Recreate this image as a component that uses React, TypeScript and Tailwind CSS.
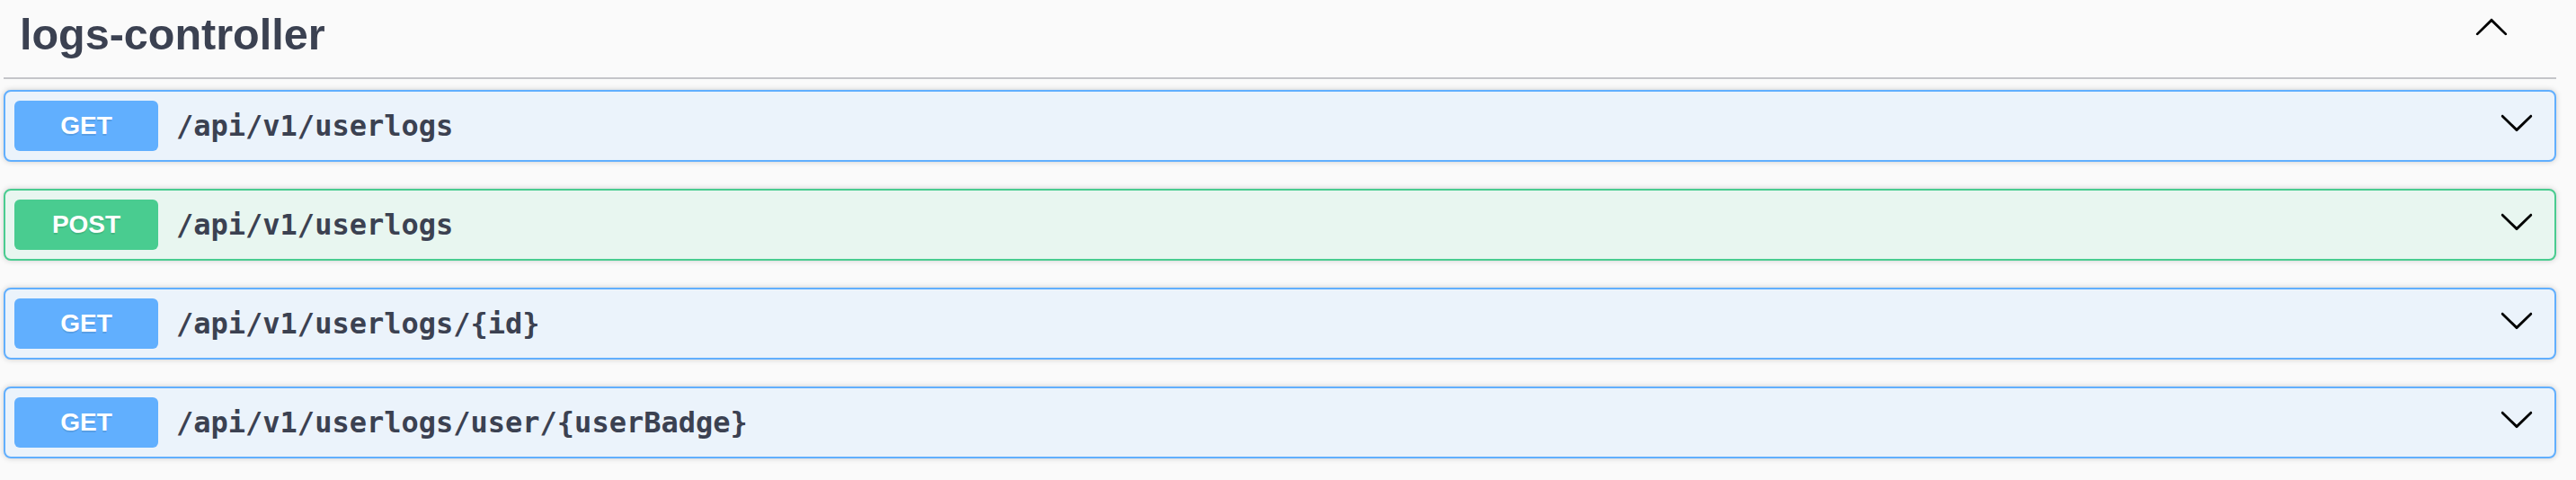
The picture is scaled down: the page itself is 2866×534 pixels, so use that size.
const ops = [
  { method: "GET", path: "/api/v1/userlogs" },
  { method: "POST", path: "/api/v1/userlogs" },
  { method: "GET", path: "/api/v1/userlogs/{id}" },
  { method: "GET", path: "/api/v1/userlogs/user/{userBadge}" },
];

function ArrowDown() {
  return (
    <svg viewBox="0 0 20 20" className="mb-[8px] h-[40px] w-[40px] shrink-0 fill-black">
      <path d="M17.418 6.109c.272-.268.709-.268.979 0s.271.701 0 .969l-7.908 7.83c-.27.268-.707.268-.979 0l-7.908-7.83c-.27-.268-.27-.701 0-.969.271-.268.709-.268.979 0L10 13.25l7.418-7.141z" />
    </svg>
  );
}

function ArrowUp() {
  return (
    <svg viewBox="0 0 20 20" className="mb-[18px] h-[40px] w-[40px] shrink-0 fill-black">
      <path d="M17.418 14.908c.272.268.709.268.979 0s.271-.701 0-.969l-7.908-7.83c-.27-.268-.707-.268-.979 0l-7.908 7.83c-.27.268-.27.701 0 .969.271.268.709.268.979 0L10 7.767l7.418 7.141z" />
    </svg>
  );
}

function OpBlock({ method, path }: { method: string; path: string }) {
  const post = method === "POST";
  return (
    <div
      className={
        post
          ? "mb-[30px] rounded-[8px] border-2 border-[#49cc90] bg-[#e8f6f0] shadow-[0_0_6px_rgba(0,0,0,0.19)]"
          : "mb-[30px] rounded-[8px] border-2 border-[#61affe] bg-[#ebf3fb] shadow-[0_0_6px_rgba(0,0,0,0.19)]"
      }
    >
      <div className="flex items-center p-[10px] pr-[22px]">
        <span
          className={
            post
              ? "flex h-[56px] w-[160px] shrink-0 items-center justify-center rounded-[6px] bg-[#49cc90] font-['Liberation_Sans',Arial,sans-serif] text-[28px] font-bold text-white [text-shadow:0_2px_0_rgba(0,0,0,0.1)]"
              : "flex h-[56px] w-[160px] shrink-0 items-center justify-center rounded-[6px] bg-[#61affe] font-['Liberation_Sans',Arial,sans-serif] text-[28px] font-bold text-white [text-shadow:0_2px_0_rgba(0,0,0,0.1)]"
          }
        >
          {method}
        </span>
        <span className="flex-1 px-[20px] font-['DejaVu_Sans_Mono',monospace] text-[32px] font-bold text-[#3b4151]">
          {path}
        </span>
        <ArrowDown />
      </div>
    </div>
  );
}

export default function App() {
  return (
    <div className="min-h-[534px] bg-[#fafafa] pl-[4px] pr-[22px]">
      <div className="flex h-[88px] items-center border-b-2 border-[#c4c5c9] pb-[10px] pl-[18px] pr-[52px]">
        <h3 className="flex-1 font-['Liberation_Sans',Arial,sans-serif] text-[48.5px] font-bold leading-none text-[#3b4151]">
          logs-controller
        </h3>
        <ArrowUp />
      </div>
      <div className="pt-[12px]">
        {ops.map((op, i) => (
          <OpBlock key={i} method={op.method} path={op.path} />
        ))}
      </div>
    </div>
  );
}
